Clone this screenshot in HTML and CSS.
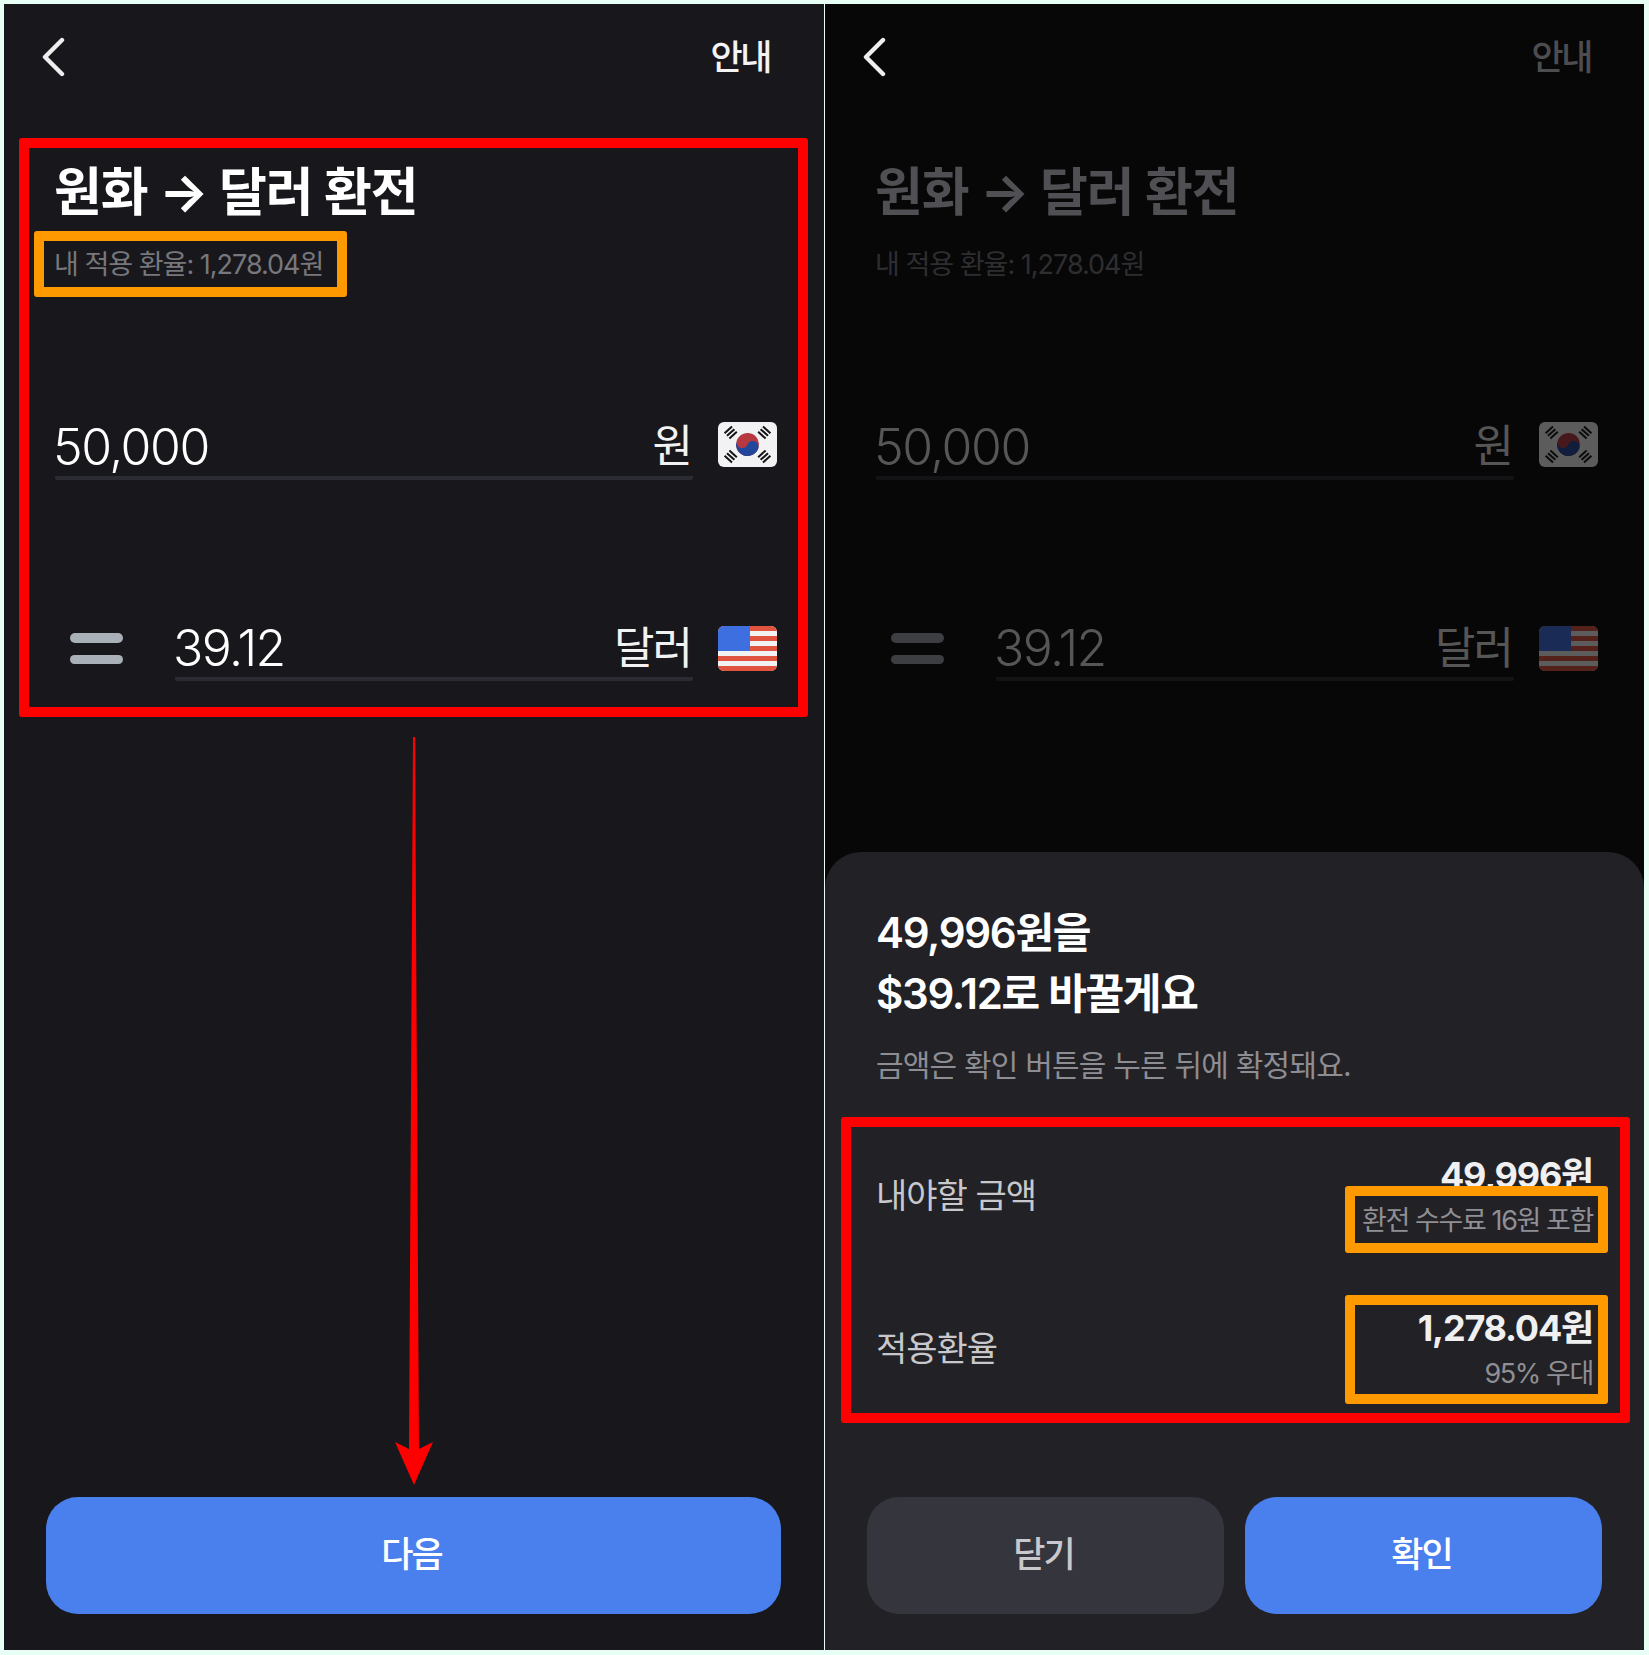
FILE: index.html
```html
<!DOCTYPE html>
<html lang="ko">
<head>
<meta charset="utf-8">
<title>원화 달러 환전</title>
<link rel="stylesheet" href="styles.css">
</head>
<body>
<svg class="defs" width="0" height="0" aria-hidden="true">
  <defs>
    <g id="flag-kr">
      <rect width="59" height="45" fill="#f2f2f4"/>
      <g transform="rotate(22 29.5 22.5)">
        <circle cx="29.5" cy="22.5" r="11.5" fill="#b8383f"/>
        <path d="M18 22.5a11.5 11.5 0 0 0 23 0 5.75 5.75 0 0 0-11.5 0 5.75 5.75 0 0 1-11.5 0z" fill="#21469c"/>
      </g>
      <g fill="#141414">
        <g transform="translate(12.7 10.5) rotate(-42)"><path d="M-5-4.6H5v2H-5zM-5-1H5v2H-5zM-5 2.6H5v2H-5z"/></g>
        <g transform="translate(46.3 10.5) rotate(42)"><path d="M-5-4.6H5v2H-5zM-5-1H5v2H-5zM-5 2.6H5v2H-5z"/></g>
        <g transform="translate(12.7 34.5) rotate(42)"><path d="M-5-4.6H5v2H-5zM-5-1H5v2H-5zM-5 2.6H5v2H-5z"/></g>
        <g transform="translate(46.3 34.5) rotate(-42)"><path d="M-5-4.6H5v2H-5zM-5-1H5v2H-5zM-5 2.6H5v2H-5z"/></g>
      </g>
    </g>
    <g id="flag-us">
      <rect width="59" height="45" fill="#f2f2f2"/>
      <path d="M0 0h59v5H0zM0 10h59v5H0zM0 20h59v5H0zM0 30h59v5H0zM0 40h59v5H0z" fill="#e0533f"/>
      <rect width="32" height="25" fill="#3e6fe0"/>
    </g>
  </defs>
</svg>
<main class="stage">
  <section class="screen">
    <header class="topbar">
      <svg class="back" viewBox="0 0 24 40"><path d="M21 3 4 20l17 17"/></svg>
      <span class="guide">안내</span>
    </header>
    <h1 class="title">원화 → 달러 환전</h1>
    <p class="rate">내 적용 환율: 1,278.04원</p>
    <div class="field field-krw">
      <div class="input"><span class="num">50,000</span><span class="unit">원</span></div>
      <svg class="flag" viewBox="0 0 59 45"><use href="#flag-kr"/></svg>
    </div>
    <div class="field field-usd">
      <div class="equals"><i></i><i></i></div>
      <div class="input"><span class="num">39.12</span><span class="unit">달러</span></div>
      <svg class="flag" viewBox="0 0 59 45"><use href="#flag-us"/></svg>
    </div>
    <div class="actions"><button class="btn btn-primary">다음</button></div>
    <div class="mark red mark-a"></div>
    <div class="mark orange mark-b"></div>
    <svg class="arrow" viewBox="0 0 40 748"><path d="M19 0h2l4 712 14-7-19 43L1 705l14 7z"/></svg>
  </section>

  <section class="screen dim">
    <header class="topbar">
      <svg class="back" viewBox="0 0 24 40"><path d="M21 3 4 20l17 17"/></svg>
      <span class="guide">안내</span>
    </header>
    <h1 class="title">원화 → 달러 환전</h1>
    <p class="rate">내 적용 환율: 1,278.04원</p>
    <div class="field field-krw">
      <div class="input"><span class="num">50,000</span><span class="unit">원</span></div>
      <svg class="flag" viewBox="0 0 59 45"><use href="#flag-kr"/></svg>
    </div>
    <div class="field field-usd">
      <div class="equals"><i></i><i></i></div>
      <div class="input"><span class="num">39.12</span><span class="unit">달러</span></div>
      <svg class="flag" viewBox="0 0 59 45"><use href="#flag-us"/></svg>
    </div>

    <aside class="sheet">
      <h2 class="sheet-title">49,996원을<br>$39.12로 바꿀게요</h2>
      <p class="sheet-note">금액은 확인 버튼을 누른 뒤에 확정돼요.</p>
      <div class="row row-pay">
        <span class="row-label">내야할 금액</span>
        <div class="row-value"><strong>49,996원</strong><small>환전 수수료 16원 포함</small></div>
      </div>
      <div class="row row-rate">
        <span class="row-label">적용환율</span>
        <div class="row-value"><strong>1,278.04원</strong><small>95% 우대</small></div>
      </div>
      <div class="actions actions-two"><button class="btn btn-muted">닫기</button><button class="btn btn-primary">확인</button></div>
      <div class="mark red mark-c"></div>
      <div class="mark orange mark-d"></div>
      <div class="mark orange mark-e"></div>
    </aside>
  </section>
</main>
</body>
</html>
```
FILE: styles.css
```css
* { box-sizing: border-box; }
html, body { margin: 0; padding: 0; }
body {
  width: 1649px;
  height: 1655px;
  background: #e8fff6;
  font-family: Inter, "Noto Sans CJK KR", sans-serif;
  overflow: hidden;
}
.defs { position: absolute; }
.stage { display: flex; padding: 4px 5px 5px 4px; height: 1655px; }
.screen {
  position: relative;
  width: 820px;
  height: 1646px;
  padding: 0 47px 0 51px;
  background: #18181c;
  color: #fff;
  display: flex;
  flex-direction: column;
}
.screen.dim {
  width: 819px;
  margin-left: 1px;
  padding-right: 46px;
  background: #070708;
}
.topbar {
  height: 106px;
  padding-top: 33px;
  display: flex;
  justify-content: space-between;
  align-items: flex-start;
}
.back {
  width: 24px;
  height: 40px;
  margin-left: -14px;
  fill: none;
  stroke: #eee;
  stroke-width: 4.4;
  stroke-linecap: round;
  stroke-linejoin: round;
}
.guide {
  font-size: 35px;
  line-height: 40px;
  font-weight: 500;
  letter-spacing: -2.5px;
  margin-right: 7px;
  color: #f4f4f4;
}
.title {
  margin: 48px 0 0 -1px;
  font-size: 52px;
  line-height: 70px;
  font-weight: 700;
  letter-spacing: -1px;
}
.rate {
  margin: 19px 0 0 -1px;
  font-size: 27px;
  line-height: 36px;
  letter-spacing: -1px;
  color: #77777c;
}
.field { display: flex; align-items: flex-start; }
.field-krw { margin-top: 139px; }
.field-usd { margin-top: 146px; }
.input {
  flex: 1;
  display: flex;
  justify-content: space-between;
  align-items: center;
  height: 58px;
  padding-bottom: 4px;
  border-bottom: 4px solid #2b2b33;
  border-radius: 0 0 2px 2px;
  margin-right: 25px;
}
.field-usd .input { height: 55px; padding-bottom: 8px; }
.num { font-size: 50px; letter-spacing: -1.5px; font-weight: 300; margin-left: -2px; }
.unit { font-size: 44px; letter-spacing: -2px; margin: 0 2px 8px 0; color: #f2f2f2; }
.field-usd .unit { margin-bottom: 6px; }
.flag { width: 59px; height: 45px; border-radius: 6px; flex: none; }
.equals {
  width: 120px;
  padding: 7px 52px 0 15px;
  display: flex;
  flex-direction: column;
  gap: 12px;
  flex: none;
}
.equals i { display: block; height: 9.5px; width: 53px; border-radius: 5px; background: #a9b0b8; }
.actions { margin-top: auto; padding: 0 0 36px; margin-left: -9px; margin-right: -4px; display: flex; gap: 21px; }
.btn {
  flex: 1;
  height: 117px;
  border: 0;
  padding: 0 4px 8px 0;
  border-radius: 32px;
  font-family: inherit;
  font-size: 35px;
  font-weight: 500;
  letter-spacing: -2px;
  color: #fff;
}
.btn-primary { background: #4a80ee; }
.btn-muted { background: #35353d; color: #c9c9cd; }

.dim .guide { color: #4d4d50; }
.dim .title { color: #505054; }
.dim .rate { color: #2e2e30; }
.dim .num, .dim .unit { color: #565656; }
.dim .input { border-bottom-color: #131315; }
.dim .equals i { background: #3c3e41; }
.dim .flag { opacity: .36; }

.sheet {
  position: absolute;
  left: 0;
  right: 0;
  top: 848px;
  bottom: 0;
  background: #212126;
  border-radius: 36px 36px 0 0;
  padding: 50px 46px 0 51px;
  display: flex;
  flex-direction: column;
}
.sheet-title {
  margin: 0;
  font-size: 42px;
  line-height: 61px;
  font-weight: 600;
  letter-spacing: -1.3px;
}
.sheet-note {
  margin: 21px 0 0;
  font-size: 30px;
  line-height: 40px;
  letter-spacing: -0.8px;
  color: #8d8d93;
}
.row { display: flex; justify-content: space-between; align-items: center; }
.row-pay { margin-top: 67px; }
.row-rate { margin-top: 62px; }
.row-label { font-size: 34px; letter-spacing: -1px; color: #c8c8cc; font-weight: 400; margin-bottom: 8px; }
.row-value { display: flex; flex-direction: column; align-items: flex-end; margin-right: 5px; }
.row-value strong { font-size: 36px; line-height: 46px; font-weight: 700; letter-spacing: -1.2px; color: #f0f0f0; }
.row-value small { font-size: 27px; line-height: 45px; letter-spacing: -1.4px; color: #8f8f94; }

.mark { position: absolute; border-style: solid; border-width: 10px; border-radius: 3px; }
.red { border-color: #ff0000; }
.orange { border-color: #ff9900; }
.mark-a { left: 15px; top: 134px; width: 789px; height: 579px; }
.mark-b { left: 30px; top: 227px; width: 313px; height: 66px; }
.mark-c { left: 16px; top: 265px; width: 789px; height: 306px; }
.mark-d { left: 520px; top: 334px; width: 263px; height: 67px; }
.mark-e { left: 520px; top: 443px; width: 263px; height: 109px; }
.arrow { position: absolute; left: 390px; top: 733px; width: 40px; height: 748px; fill: #ff0000; }
```
